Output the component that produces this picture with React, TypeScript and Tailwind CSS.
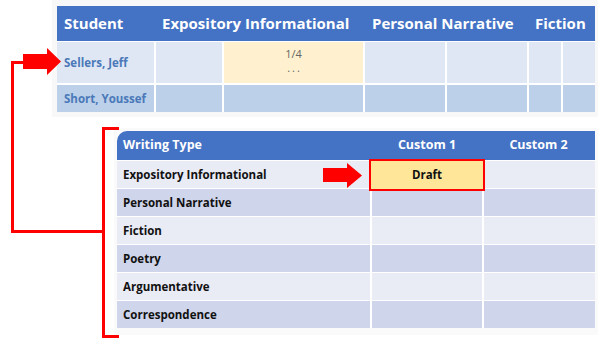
import React from 'react';

const font = { fontFamily: '"Open Sans", "Liberation Sans", sans-serif' };

const writingTypes = [
  'Expository Informational',
  'Personal Narrative',
  'Fiction',
  'Poetry',
  'Argumentative',
  'Correspondence',
];

const StudentTable: React.FC = () => (
  <div className="ml-[52px] w-[546px] h-[117px] bg-[#f8f8f8] pt-[6px] pl-[5px]">
    <div className="w-[538px] grid grid-cols-[97px_66px_139px_80px_80px_32px_32px] gap-x-[2px] bg-white">
      <div className="col-span-7 h-[35px] bg-[#4472c4] flex items-center text-white font-bold text-[15px]">
        <div className="w-[98px] pl-[7px]">Student</div>
        <div className="w-[210px] pl-[7px]">Expository Informational</div>
        <div className="w-[162px] pl-[7px]">Personal Narrative</div>
        <div className="pl-[8px]">Fiction</div>
      </div>
      <div className="col-span-7 h-[1px] bg-white" />
      <div className="h-[41px] bg-[#dfe7f5] flex items-center pl-[7px] text-[11.5px] font-bold text-[#4a78b8]">Sellers, Jeff</div>
      <div className="bg-[#dfe7f5]" />
      <div className="bg-[#fff1cf] flex flex-col items-center pt-[5px] text-[11px] text-[#666] leading-[14px]">
        <span>1/4</span>
        <span className="tracking-[2px] pl-[2px]">...</span>
      </div>
      <div className="bg-[#dfe7f5]" />
      <div className="bg-[#dfe7f5]" />
      <div className="bg-[#dfe7f5]" />
      <div className="bg-[#dfe7f5]" />
      <div className="col-span-7 h-[2px] bg-white" />
      <div className="h-[27px] bg-[#bcd0ea] flex items-center pl-[7px] text-[11.5px] font-bold text-[#4a78b8]">Short, Youssef</div>
      <div className="bg-[#bcd0ea]" />
      <div className="bg-[#bcd0ea]" />
      <div className="bg-[#bcd0ea]" />
      <div className="bg-[#bcd0ea]" />
      <div className="bg-[#bcd0ea]" />
      <div className="bg-[#bcd0ea]" />
    </div>
  </div>
);

const WritingTable: React.FC = () => (
  <div className="ml-[114px] mt-[11px] w-[484px] h-[207px] bg-[#fafafa] pt-[3px] pl-[3px]">
    <div className="w-[478px] grid grid-cols-[253px_110px_111px] gap-x-[2px] gap-y-[1px] bg-white">
      <div className="col-span-3 h-[29px] bg-[#4472c4] rounded-tl-[10px] flex items-center text-white font-bold text-[12.5px]">
        <div className="w-[255px] pl-[6px]">Writing Type</div>
        <div className="w-[110px] text-center">Custom 1</div>
        <div className="w-[113px] text-center">Custom 2</div>
      </div>
      {writingTypes.map((t, i) => {
        const bg = i % 2 === 0 ? 'bg-[#e9ebf5]' : 'bg-[#cfd5ea]';
        return (
          <React.Fragment key={t}>
            <div className={`h-[27px] ${bg} flex items-center pl-[6px] text-[11.5px] font-bold text-[#111]`}>{t}</div>
            <div className={`${bg} relative`}>
              {i === 0 && (
                <div className="absolute -inset-[3px] -top-[2px] border-2 border-[#ff0000] bg-[#ffe699] flex items-center justify-center text-[11.5px] font-bold text-[#111] z-10">
                  Draft
                </div>
              )}
            </div>
            <div className={bg} />
          </React.Fragment>
        );
      })}
    </div>
  </div>
);

export default function App() {
  return (
    <div className="relative w-[602px] h-[346px] bg-white overflow-hidden" style={font}>
      <StudentTable />
      <WritingTable />

      {/* connector from student row to writing type table */}
      <div className="absolute left-[11px] top-[61px] w-[3px] h-[172px] bg-[#ff0000]" />
      <div className="absolute left-[11px] top-[61px] w-[14px] h-[3px] bg-[#ff0000]" />
      <div className="absolute left-[11px] top-[230px] w-[94px] h-[3px] bg-[#ff0000]" />
      <div className="absolute left-[102px] top-[127px] w-[3px] h-[211px] bg-[#ff0000]" />
      <div className="absolute left-[102px] top-[127px] w-[17px] h-[3px] bg-[#ff0000]" />
      <div className="absolute left-[102px] top-[335px] w-[17px] h-[3px] bg-[#ff0000]" />
      <svg className="absolute left-[23px] top-[48px]" width="38" height="27" viewBox="0 0 38 27">
        <polygon points="0,6 24,6 24,0 38,13.5 24,27 24,21 0,21" fill="#ff0000" />
      </svg>
      <svg className="absolute left-[323px] top-[163px]" width="39" height="25" viewBox="0 0 39 25">
        <polygon points="0,5 24,5 24,0 39,12.5 24,25 24,19 0,19" fill="#ff0000" />
      </svg>
    </div>
  );
}
